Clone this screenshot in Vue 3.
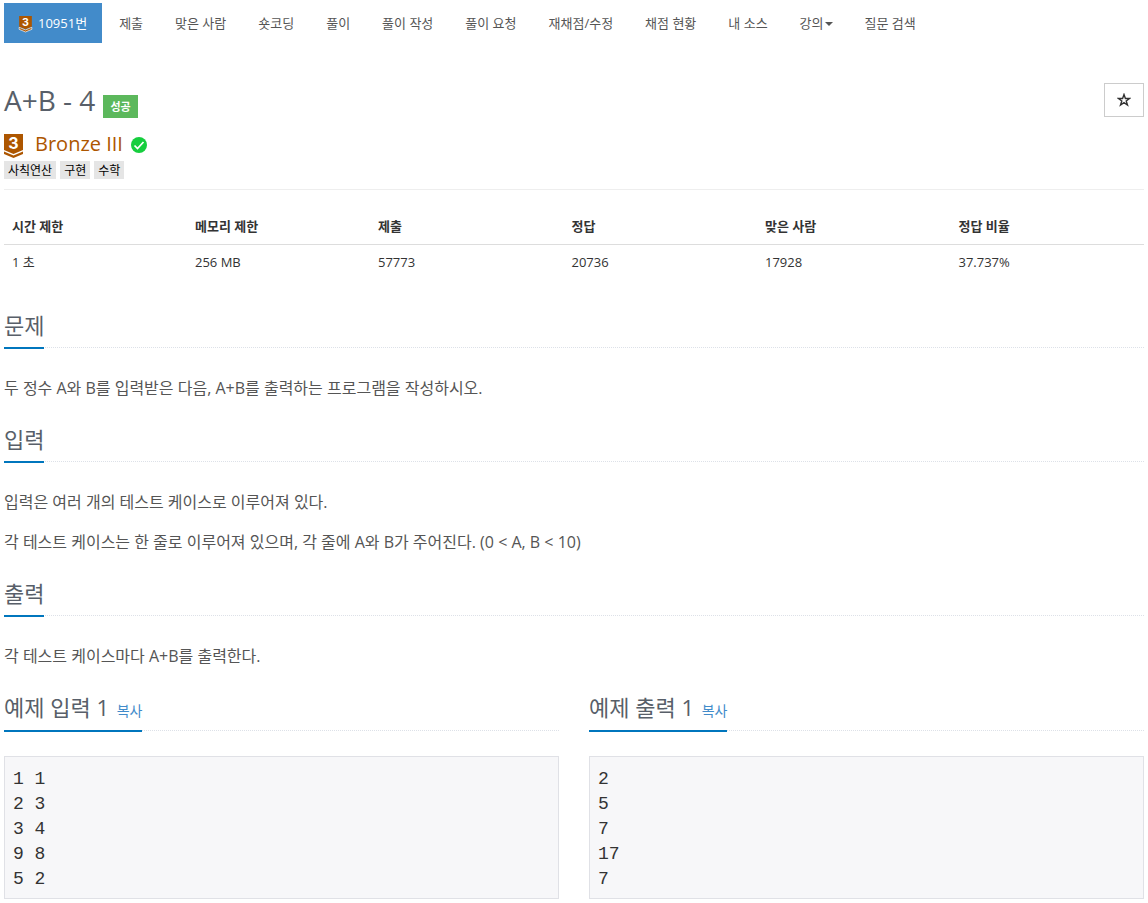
<template>
  <div class="container">
    <ul class="menu">
      <li v-for="item in menu" :key="item.title">
        <a href="#" class="menu-link" :class="{ active: item.active }">
          <svg v-if="item.active" class="menu-tier" viewBox="0 0 19 24">
            <path d="M0 0h19v16l-9.500 4L0 16z" fill="#ad5600" />
            <path d="M0 17l9.500 4l9.500-4v3l-9.500 4L0 20z" fill="#ad5600" stroke="#fff" />
            <text x="9.500" y="14.500" text-anchor="middle">3</text>
          </svg>
          <span>{{ item.title }}</span>
          <span v-if="item.caret" class="caret"></span>
        </a>
      </li>
    </ul>

    <div class="page-header">
      <div class="title-row">
        <h1>A+B - 4</h1>
        <span class="label">성공</span>
        <button class="star" type="button" aria-label="즐겨찾기">
          <svg viewBox="0 0 14 14">
            <path
              d="M7 1.500l1.400 4h4.200L9.200 8l1.300 4L7 9.700l-3.500 2.300L4.800 8L1.400 5.500h4.200z"
              fill="none"
              stroke="#333"
              stroke-width="1.400"
            />
          </svg>
        </button>
      </div>
      <div class="tier">
        <svg class="tier-icon" viewBox="0 0 19 24">
          <path d="M0 0h19v16l-9.500 4L0 16z" fill="#ad5600" />
          <path d="M0 17.500l9.500 4l9.500-4v2.500l-9.500 4L0 20z" fill="#ad5600" />
          <text x="9.500" y="14.500" text-anchor="middle">3</text>
        </svg>
        <span>Bronze III</span>
        <svg class="check" viewBox="0 0 16 16">
          <circle cx="8" cy="8" r="8" fill="#16ce3e" />
          <path d="M3.500 8.500l3 3l6-6.500" fill="none" stroke="#fff" stroke-width="1.700" />
        </svg>
      </div>
      <div class="tags">
        <span v-for="tag in tags" :key="tag" class="tag">{{ tag }}</span>
      </div>
    </div>

    <table class="info">
      <thead>
        <tr>
          <th v-for="col in info" :key="col.name">{{ col.name }}</th>
        </tr>
      </thead>
      <tbody>
        <tr>
          <td v-for="col in info" :key="col.name">{{ col.value }}</td>
        </tr>
      </tbody>
    </table>

    <section v-for="section in sections" :key="section.title">
      <div class="headline">
        <h2>{{ section.title }}</h2>
      </div>
      <div class="problem-text">
        <p v-for="line in section.lines" :key="line">{{ line }}</p>
      </div>
    </section>

    <div class="samples">
      <section v-for="sample in samples" :key="sample.title">
        <div class="headline">
          <h2>
            {{ sample.title }}
            <button class="copy" type="button" @click="copy(sample.data)">복사</button>
          </h2>
        </div>
        <pre class="sampledata">{{ sample.data }}</pre>
      </section>
    </div>
  </div>
</template>

<script setup>
const menu = [
  { title: '10951번', active: true },
  { title: '제출' },
  { title: '맞은 사람' },
  { title: '숏코딩' },
  { title: '풀이' },
  { title: '풀이 작성' },
  { title: '풀이 요청' },
  { title: '재채점/수정' },
  { title: '채점 현황' },
  { title: '내 소스' },
  { title: '강의', caret: true },
  { title: '질문 검색' },
]

const tags = ['사칙연산', '구현', '수학']

const info = [
  { name: '시간 제한', value: '1 초' },
  { name: '메모리 제한', value: '256 MB' },
  { name: '제출', value: '57773' },
  { name: '정답', value: '20736' },
  { name: '맞은 사람', value: '17928' },
  { name: '정답 비율', value: '37.737%' },
]

const sections = [
  {
    title: '문제',
    lines: ['두 정수 A와 B를 입력받은 다음, A+B를 출력하는 프로그램을 작성하시오.'],
  },
  {
    title: '입력',
    lines: [
      '입력은 여러 개의 테스트 케이스로 이루어져 있다.',
      '각 테스트 케이스는 한 줄로 이루어져 있으며, 각 줄에 A와 B가 주어진다. (0 < A, B < 10)',
    ],
  },
  {
    title: '출력',
    lines: ['각 테스트 케이스마다 A+B를 출력한다.'],
  },
]

const samples = [
  { title: '예제 입력 1', data: '1 1\n2 3\n3 4\n9 8\n5 2' },
  { title: '예제 출력 1', data: '2\n5\n7\n17\n7' },
]

function copy(text) {
  navigator.clipboard.writeText(text)
}
</script>

<style>
body {
  margin: 0;
  background: #fff;
}
</style>

<style scoped>
.container {
  padding: 3px 4px 4px;
  color: #333;
  font-family: 'Open Sans', 'Noto Sans CJK KR', sans-serif;
  font-size: 13px;
  line-height: 20px;
}

.menu {
  display: flex;
  flex-wrap: wrap;
  gap: 2px;
  margin: 0 0 40px;
  padding: 0;
  list-style: none;
}

.menu-link {
  display: flex;
  align-items: center;
  height: 40px;
  padding: 0 15px;
  color: #555;
  text-decoration: none;
}

.menu-link.active {
  background: #428bca;
  color: #fff;
}

.menu-tier {
  width: 13px;
  height: 16px;
  margin: 2px 6px 0 0;
  overflow: visible;
}

.menu-tier text,
.tier-icon text {
  fill: #fff;
  font-family: Inter, sans-serif;
  font-size: 16px;
  font-weight: 700;
  line-height: 16px;
}

.caret {
  margin: 2px 0 0 1px;
  border-top: 4px solid #555;
  border-right: 4px solid transparent;
  border-left: 4px solid transparent;
}

.page-header {
  padding-bottom: 10px;
  border-bottom: 1px solid #eee;
}

.title-row {
  display: flex;
  align-items: flex-start;
}

h1 {
  margin: 0 8px 0 0;
  color: #585f69;
  font-size: 28px;
  font-weight: 400;
  line-height: 34px;
}

.label {
  margin-top: 12px;
  padding: 0 7px;
  background: #5cb85c;
  color: #fff;
  font-size: 11px;
  font-weight: 700;
  line-height: 23px;
}

.star {
  display: flex;
  align-items: center;
  justify-content: center;
  width: 40px;
  height: 34px;
  margin-left: auto;
  padding: 0;
  border: 1px solid #ccc;
  background: #fff;
  cursor: pointer;
}

.star svg {
  width: 14px;
  height: 14px;
}

.tier {
  display: flex;
  align-items: flex-start;
  margin-top: 13px;
  padding-bottom: 3px;
  color: #ad5600;
  font-size: 20px;
  line-height: 26px;
}

.tier-icon {
  width: 19px;
  height: 24px;
  margin: 3px 12px 0 0;
  overflow: visible;
}

.check {
  width: 16px;
  height: 16px;
  margin: 6px 0 0 8px;
}

.tags {
  display: flex;
  gap: 4px;
}

.tag {
  padding: 2px 4px 0;
  background: #e5e5e5;
  color: #000;
  font-size: 12px;
  line-height: 16px;
}

.info {
  width: 100%;
  margin: 18px 0 28px;
  border-collapse: collapse;
  table-layout: fixed;
}

.info th,
.info td {
  width: 17%;
  padding: 8px;
  text-align: left;
}

.info th:nth-child(-n + 2) {
  width: 16%;
}

.info th {
  border-bottom: 1px solid #ddd;
}

.info td {
  padding: 7px 8px 9px;
}

.headline {
  display: flex;
  margin-bottom: 27px;
  border-bottom: 1px dotted #dde1e8;
}

h2 {
  margin: 0 0 -2px;
  padding-bottom: 5px;
  border-bottom: 2px solid #0076bd;
  color: #585f69;
  font-size: 22px;
  font-weight: 400;
  line-height: 33px;
}

.problem-text {
  color: #555;
  font-size: 16px;
  line-height: 26px;
}

.problem-text p {
  margin: 0 0 14px;
}

.problem-text p:last-child {
  margin-bottom: 22px;
}

.samples {
  display: grid;
  grid-template-columns: 1fr 1fr;
  gap: 30px;
}

.samples .headline {
  margin-bottom: 25px;
}

.samples h2 {
  padding-bottom: 6px;
}

.copy {
  margin-left: 2px;
  padding: 0;
  border: 0;
  background: none;
  color: #428bca;
  font-family: inherit;
  font-size: 14px;
  cursor: pointer;
}

.sampledata {
  margin: 0;
  padding: 10px 8px 6px;
  border: 1px solid #e0e1e6;
  background: #f7f7f9;
  color: #333;
  font-family: 'Liberation Mono', monospace;
  font-size: 18px;
  line-height: 25px;
}
</style>
